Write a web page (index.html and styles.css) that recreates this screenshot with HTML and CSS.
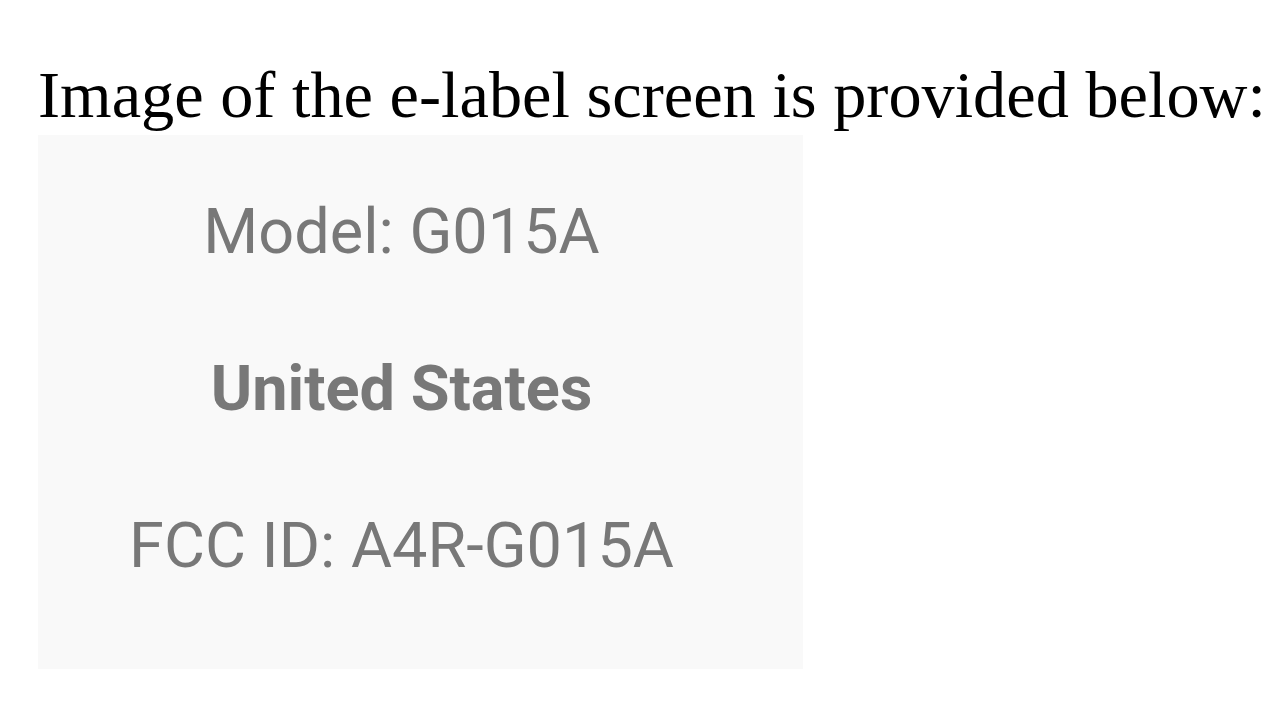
FILE: index.html
```html
<!DOCTYPE html>
<html>
<head>
<meta charset="utf-8">
<link rel="stylesheet" href="styles.css">
</head>
<body>
<p class="intro">Image of the e-label screen is provided below:</p>
<div class="label">
  <div class="line">Model: G015A</div>
  <div class="line bold">United States</div>
  <div class="line">FCC ID: A4R-G015A</div>
</div>
</body>
</html>
```
FILE: styles.css
```css
html, body {
  margin: 0;
  padding: 0;
  background: #ffffff;
}
body {
  padding: 0 0 0 38px;
}
.intro {
  margin: 0;
  padding-top: 61px;
  font-family: "Liberation Serif", "Times New Roman", serif;
  font-size: 66.3px;
  line-height: 68px;
  color: #000;
  white-space: nowrap;
}
.label {
  margin-top: 6px;
  width: 765px;
  height: 534px;
  background: #f9f9f9;
  box-sizing: border-box;
  padding: 60px 38px 0 0;
  display: flex;
  flex-direction: column;
  align-items: center;
  gap: 83px;
  font-family: Roboto, "Noto Sans", sans-serif;
  font-size: 63px;
  line-height: 74px;
  color: #787878;
}
.bold {
  font-weight: 700;
}
```
